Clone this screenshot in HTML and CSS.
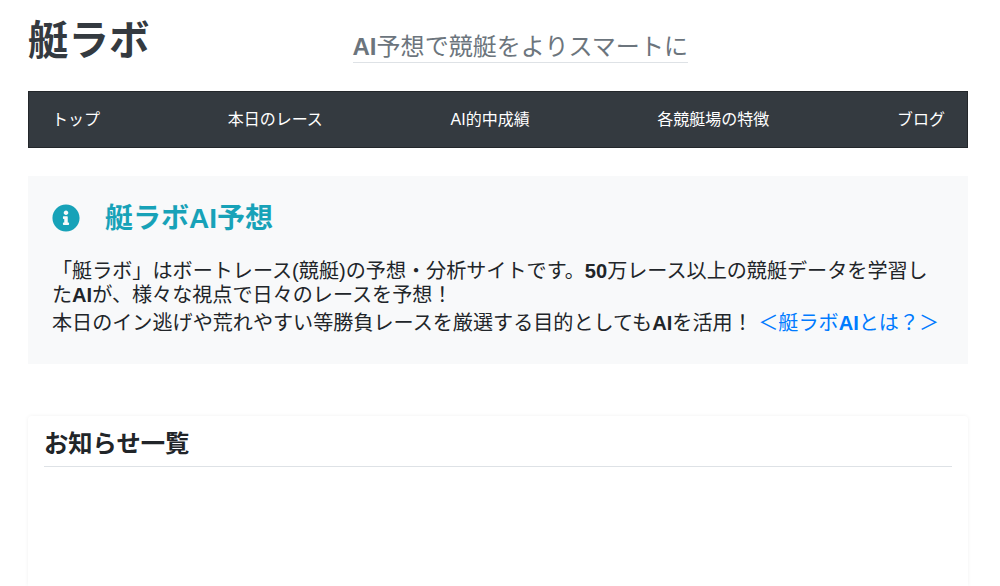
FILE: index.html
```html
<!DOCTYPE html>
<html lang="ja">
<head>
<meta charset="utf-8">
<title>艇ラボ</title>
<link rel="stylesheet" href="styles.css">
</head>
<body>
<div class="page">
  <header class="head">
    <h1 class="logo">艇ラボ</h1>
    <p class="tagline"><b>AI</b>予想で競艇をよりスマートに</p>
  </header>
  <nav class="nav">
    <a>トップ</a>
    <a>本日のレース</a>
    <a>AI的中成績</a>
    <a>各競艇場の特徴</a>
    <a>ブログ</a>
  </nav>
  <section class="info">
    <h2 class="info-title">
      <svg class="info-icon" viewBox="0 0 512 512" aria-hidden="true"><path fill="#17a2b8" d="M256 8C119 8 8 119 8 256s111 248 248 248 248-111 248-248S393 8 256 8zm0 110c23 0 42 19 42 42s-19 42-42 42-42-19-42-42 19-42 42-42zm56 254c0 7-5 12-12 12h-88c-7 0-12-5-12-12v-24c0-7 5-12 12-12h12v-64h-12c-7 0-12-5-12-12v-24c0-7 5-12 12-12h64c7 0 12 5 12 12v100h12c7 0 12 5 12 12v24z"/></svg>
      <span>艇ラボAI予想</span>
    </h2>
    <p class="info-text">「艇ラボ」はボートレース(競艇)の予想・分析サイトです。<b>50</b>万レース以上の競艇データを学習した<b>AI</b>が、様々な視点で日々のレースを予想！</p>
    <p class="info-text info-next">本日のイン逃げや荒れやすい等勝負レースを厳選する目的としても<b>AI</b>を活用！ <a class="more">＜艇ラボ<b>AI</b>とは？＞</a></p>
  </section>
  <section class="card">
    <h3 class="card-title">お知らせ一覧</h3>
  </section>
</div>
</body>
</html>
```
FILE: styles.css
```css
* { box-sizing: border-box; }
html, body { margin: 0; height: 586px; overflow: hidden; background: #fff; }
body {
  font-family: "Liberation Sans", "Noto Sans CJK JP", sans-serif;
  color: #212529;
}
.page { padding: 0 32px 0 28px; }
.head { display: flex; height: 91px; }
.logo {
  margin: 14px 0 0;
  font-size: 40.5px;
  line-height: 54px;
  height: 54px;
  font-weight: 700;
  color: #343a40;
}
.tagline {
  margin: 30px 0 0 203px;
  height: 33px;
  font-size: 24.05px;
  line-height: 34px;
  font-weight: 400;
  color: #6c757d;
  border-bottom: 1px solid #dee2e6;
}
.nav {
  display: flex;
  justify-content: space-between;
  align-items: center;
  height: 57px;
  padding: 0 22px 4px 23px;
  background: #343a40;
  border: 1px solid #23272b;
  color: #fff;
  font-size: 16px;
  font-weight: 400;
}
.info {
  margin-top: 28px;
  height: 188px;
  padding: 24px 24px 0;
  background: #f8f9fa;
}
.info-title {
  display: flex;
  align-items: center;
  gap: 25px;
  margin: 0;
  height: 36px;
  font-size: 28px;
  line-height: 37px;
  font-weight: 700;
  color: #17a2b8;
}
.info-icon { width: 28px; height: 28px; }
.info-text {
  margin: 23px 0 0 0;
  font-size: 20.1px;
  line-height: 24px;
  font-weight: 400;
  color: #212529;
}
.info-next { margin-top: 4px; }
.more { color: #007bff; }
.card {
  margin-top: 52px;
  height: 170px;
  padding: 12px 16px 0;
  border-radius: 4px 4px 0 0;
  box-shadow: 0 0 4px rgba(0,0,0,.06);
}
.card-title {
  margin: 0;
  height: 39px;
  font-size: 24.3px;
  line-height: 31px;
  font-weight: 700;
  color: #212529;
  border-bottom: 1px solid #dee2e6;
}
```
